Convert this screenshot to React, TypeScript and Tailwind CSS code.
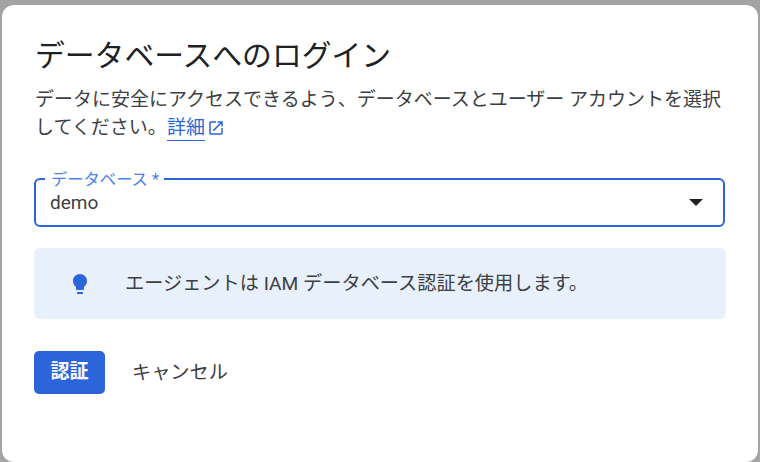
const fontStack = "font-['Roboto','Noto_Sans_CJK_JP',sans-serif]";

function OpenInNewIcon() {
  return (
    <svg viewBox="0 0 24 24" className="inline-block w-[18px] h-[18px] fill-[#2b65d9] align-[-3px] ml-[2px]">
      <path d="M19 19H5V5h7V3H5c-1.11 0-2 .9-2 2v14c0 1.1.89 2 2 2h14c1.1 0 2-.9 2-2v-7h-2v7zM14 3v2h3.59l-9.83 9.83 1.41 1.41L19 6.41V10h2V3h-7z" />
    </svg>
  );
}

function LightbulbIcon() {
  return (
    <svg viewBox="0 0 24 24" className="w-6 h-6 fill-[#2b65d9] flex-shrink-0">
      <path d="M9 21c0 .55.45 1 1 1h4c.55 0 1-.45 1-1v-1H9v1zm3-19C8.14 2 5 5.14 5 9c0 2.38 1.19 4.47 3 5.74V17c0 .55.45 1 1 1h6c.55 0 1-.45 1-1v-2.26c1.81-1.27 3-3.36 3-5.74 0-3.86-3.14-7-7-7z" />
    </svg>
  );
}

export default function App() {
  return (
    <div className={`w-[760px] h-[462px] overflow-hidden bg-[#a3a3a3] pt-[5px] px-[2px] ${fontStack}`}>
      <div className="h-[457px] rounded-[12px] bg-white pl-[33px] pr-[32px] pt-[31px]">
        <h1 className="text-[29.8px] leading-[40px] font-normal text-[#202124]">データベースへのログイン</h1>

        <p className="mt-[10px] w-[692px] text-[19px] leading-[28px] text-[#3c4043]">
          データに安全にアクセスできるよう、データベースとユーザー アカウントを選択してください。
          <a className="text-[#2b65d9] border-b border-[#2b65d9] pb-[1px]">詳細</a>
          <OpenInNewIcon />
        </p>

        <div className="relative mt-[36px] -ml-[1px] w-[691px] h-[49px] rounded-[6px] border-2 border-[#2b65d9] flex items-center justify-between pl-[14px] pr-[19px]">
          <span className="absolute left-[9px] -top-[9px] bg-white pl-[6px] pr-[5px] text-[16.3px] leading-[18px] text-[#4a80e8]">
            データベース *
          </span>
          <span className="pt-[1px] text-[19px] leading-[24px] text-[#3c4043]">demo</span>
          <span className="w-0 h-0 border-x-[7px] border-x-transparent border-t-[7px] border-t-[#202124] -translate-x-[1px]" />
        </div>

        <div className="mt-[21px] -ml-[1px] w-[692px] h-[71px] rounded-[6px] bg-[#e8f0fc] flex items-center pl-[34px] gap-[33px]">
          <LightbulbIcon />
          <span className="text-[19.2px] leading-[28px] text-[#3c4043]">
            エージェントは IAM データベース認証を使用します。
          </span>
        </div>

        <div className="mt-[32px] -ml-[1px] flex items-center gap-[27px]">
          <button className="w-[71px] h-[43px] rounded-[5px] bg-[#2b65d9] text-white text-[19px] font-bold">認証</button>
          <button className="pt-[2px] text-[19.2px] font-normal text-[#3c4043]">キャンセル</button>
        </div>
      </div>
    </div>
  );
}
